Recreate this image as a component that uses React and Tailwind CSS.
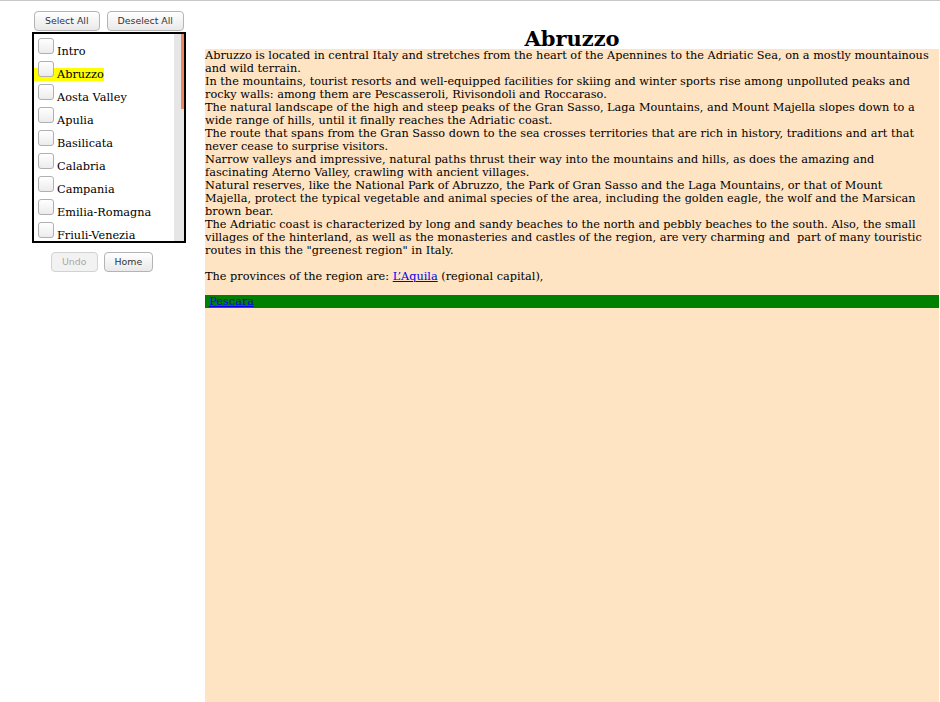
import React from 'react';

const regions = [
  'Intro',
  'Abruzzo',
  'Aosta Valley',
  'Apulia',
  'Basilicata',
  'Calabria',
  'Campania',
  'Emilia-Romagna',
  'Friuli-Venezia',
  'Lazio',
];

const Btn = ({ children, disabled }) => (
  <button
    disabled={disabled}
    className={`h-[20px] px-[10px] rounded-[4px] border font-['DejaVu_Sans',sans-serif] text-[9.4px] leading-[18px] ${
      disabled
        ? 'border-[#d2d2d2] bg-[#f2f2f2] text-[#a8a8a8]'
        : 'border-[#b4b4b4] bg-[linear-gradient(#ffffff,#e9e9e9)] text-[#333]'
    }`}
  >
    {children}
  </button>
);

const Row = ({ name, active }) => (
  <div className="h-[23px] flex items-end">
    <label className={`inline-flex items-end h-[13px] pl-[4px] ${active ? 'bg-[#ffff00]' : ''}`}>
      <span className="w-[16px] h-[16px] mb-[4px] shrink-0 rounded-[3px] border border-[#b0b0b0] bg-[linear-gradient(#ffffff,#ececec)]" />
      <span className="ml-[3px] whitespace-nowrap">{name}</span>
    </label>
  </div>
);

export default function App() {
  return (
    <div className="h-[702px] overflow-hidden bg-white border-t border-[#c8c8c8] flex font-['DejaVu_Serif',serif] text-black">
      {/* sidebar */}
      <aside className="w-[205px] shrink-0">
        <div className="flex gap-[7px] pl-[34px] pt-[10px]">
          <Btn>Select All</Btn>
          <Btn>Deselect All</Btn>
        </div>
        <div className="ml-[32px] mt-[1px] w-[154px] h-[211px] border-2 border-black flex text-[11.3px] leading-[13px]">
          <div className="flex-1 overflow-hidden pt-[1px]">
            {regions.map((r) => (
              <Row key={r} name={r} active={r === 'Abruzzo'} />
            ))}
          </div>
          <div className="w-[10px] bg-[#e6e6e6] flex justify-end">
            <div className="w-[3px] h-[75px] bg-[#ee8760]" />
          </div>
        </div>
        <div className="flex gap-[6px] pl-[51px] mt-[9px]">
          <Btn disabled>Undo</Btn>
          <Btn>Home</Btn>
        </div>
      </aside>

      {/* content */}
      <main className="flex-1 flex flex-col mr-[1px]">
        <h1 className="pt-[28px] text-center text-[21px] leading-[20px] font-bold">Abruzzo</h1>
        <div className="flex-1 bg-[#ffe4c4] text-[11.3px] leading-[13px]">
          <p className="pr-[9px]">
            Abruzzo is located in central Italy and stretches from the heart of the Apennines to the Adriatic Sea, on a mostly mountainous and wild terrain.
            <br />
            In the mountains, tourist resorts and well-equipped facilities for skiing and winter sports rise among unpolluted peaks and rocky walls: among them are Pescasseroli, Rivisondoli and Roccaraso.
            <br />
            The natural landscape of the high and steep peaks of the Gran Sasso, Laga Mountains, and Mount Majella slopes down to a wide range of hills, until it finally reaches the Adriatic coast.
            <br />
            The route that spans from the Gran Sasso down to the sea crosses territories that are rich in history, traditions and art that never cease to surprise visitors.
            <br />
            Narrow valleys and impressive, natural paths thrust their way into the mountains and hills, as does the amazing and fascinating Aterno Valley, crawling with ancient villages.
            <br />
            Natural reserves, like the National Park of Abruzzo, the Park of Gran Sasso and the Laga Mountains, or that of Mount Majella, protect the typical vegetable and animal species of the area, including the golden eagle, the wolf and the Marsican brown bear.
            <br />
            The Adriatic coast is characterized by long and sandy beaches to the north and pebbly beaches to the south. Also, the small villages of the hinterland, as well as the monasteries and castles of the region, are very charming and{'\u00a0'} part of many touristic routes in this the "greenest region" in Italy.
            <br />
            <br />
            The provinces of the region are:{' '}
            <a href="#" className="text-[#0000ee] underline">L’Aquila</a> (regional capital),
          </p>
          <div className="mt-[12px] h-[13px] bg-[#008000] pl-[4px]">
            <a href="#" className="text-[#0000ee] underline">Pescara</a>
          </div>
        </div>
      </main>
    </div>
  );
}
